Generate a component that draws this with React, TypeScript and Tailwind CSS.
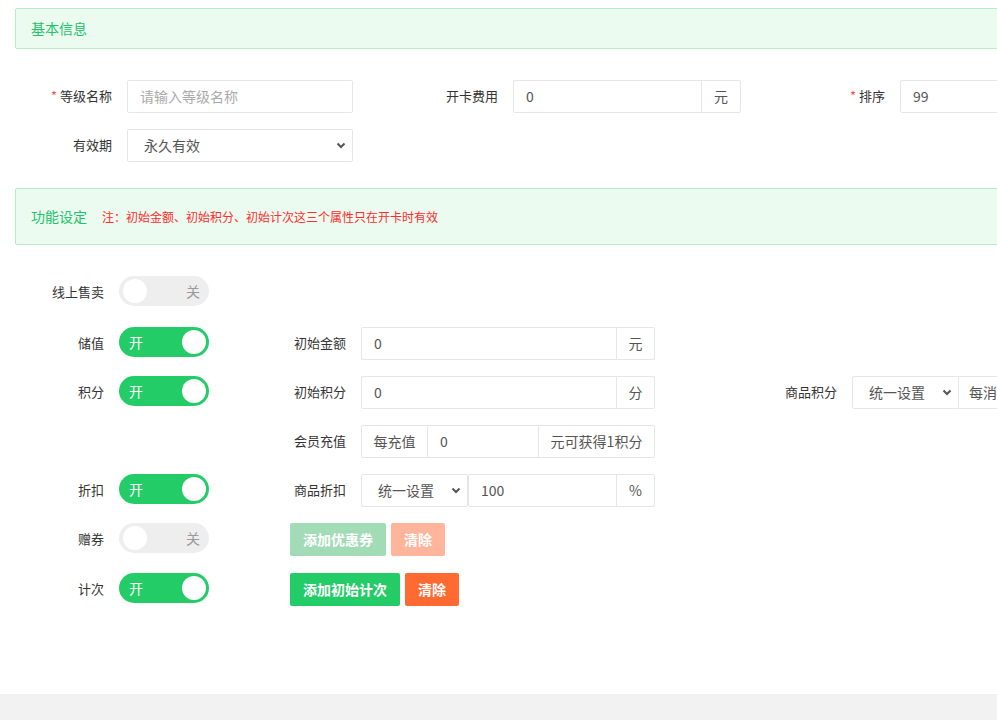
import React from 'react';

const FONT = '"Noto Sans CJK SC", "Noto Sans", sans-serif';

const Chevron: React.FC = () => (
  <svg width="10" height="7" viewBox="0 0 10 7" className="shrink-0">
    <path d="M1.5 1.5 L5 5 L8.5 1.5" fill="none" stroke="#555" strokeWidth="2" />
  </svg>
);

// section title bar
const SectionBar: React.FC<{ title: string; note?: string; tall?: boolean }> = ({ title, note, tall }) => (
  <div
    className={`flex items-center gap-[15px] rounded-[2px] border border-[#b9e9c9] bg-[#ebfbf0] pl-[15px] ${
      tall ? 'h-[57px]' : 'h-[41px]'
    }`}
  >
    <span className="text-[14px] text-[#22c269]">{title}</span>
    {note && <span className="text-[12px] text-[#ff2d2d]">{note}</span>}
  </div>
);

const Label: React.FC<{ text: string; width: string; required?: boolean }> = ({ text, width, required }) => (
  <div className={`${width} shrink-0 pr-[15px] text-right text-[13px] leading-[32px] text-[#333]`}>
    {required && <span className="mr-[3px] text-[#ff4d4f]">*</span>}
    {text}
  </div>
);

const TextBox: React.FC<{ value?: string; placeholder?: string; width: string; suffix?: string; suffixW?: string }> = ({
  value,
  placeholder,
  width,
  suffix,
  suffixW,
}) => (
  <div className={`${width} flex h-[33px] shrink-0 rounded-[2px] border border-[#e6e6e6] bg-white text-[14px]`}>
    <div className={`flex flex-1 items-center px-[12px] ${value ? 'text-[#555]' : 'text-[#aaa]'}`}>
      {value ?? placeholder}
    </div>
    {suffix && (
      <div className={`${suffixW} flex items-center justify-center border-l border-[#e6e6e6] text-[#555]`}>{suffix}</div>
    )}
  </div>
);

const SelectBox: React.FC<{ value: string; width: string; className?: string }> = ({ value, width, className }) => (
  <div
    className={`${width} flex h-[33px] shrink-0 items-center justify-between border border-[#e6e6e6] bg-white pl-[16px] pr-[6px] text-[14px] text-[#555] ${
      className ?? 'rounded-[2px]'
    }`}
  >
    <span>{value}</span>
    <Chevron />
  </div>
);

const Toggle: React.FC<{ on: boolean }> = ({ on }) =>
  on ? (
    <div className="flex h-[30px] w-[90px] shrink-0 items-center justify-between rounded-full bg-[#23cc67] pl-[10px] pr-[3px]">
      <span className="text-[14px] text-white">开</span>
      <span className="h-[24px] w-[24px] rounded-full bg-white" />
    </div>
  ) : (
    <div className="flex h-[30px] w-[90px] shrink-0 items-center justify-between rounded-full bg-[#eeeeee] pl-[4px] pr-[9px]">
      <span className="h-[24px] w-[24px] rounded-full bg-white" />
      <span className="text-[14px] text-[#999]">关</span>
    </div>
  );

const Btn: React.FC<{ text: string; color: string }> = ({ text, color }) => (
  <button className={`h-[33px] rounded-[2px] px-[13px] text-[14px] font-bold text-white ${color}`}>{text}</button>
);

export default function App() {
  return (
    <div className="flex h-[720px] w-full flex-col overflow-hidden bg-[#f2f2f2]" style={{ fontFamily: FONT }}>
      <div className="h-[694px] shrink-0 overflow-hidden bg-white">
        <div className="w-[1300px] pl-[15px] pt-[8px]">
          <SectionBar title="基本信息" />

          {/* basic info */}
          <div className="mt-[31px] flex">
            <div className="flex w-[386px]">
              <Label text="等级名称" width="w-[112px]" required />
              <TextBox placeholder="请输入等级名称" width="w-[226px]" />
            </div>
            <div className="flex w-[386px]">
              <Label text="开卡费用" width="w-[112px]" />
              <TextBox value="0" width="w-[228px]" suffix="元" suffixW="w-[39px]" />
            </div>
            <div className="flex w-[386px]">
              <Label text="排序" width="w-[113px]" required />
              <TextBox value="99" width="w-[226px]" />
            </div>
          </div>
          <div className="mt-[16px] flex">
            <Label text="有效期" width="w-[112px]" />
            <SelectBox value="永久有效" width="w-[226px]" />
          </div>

          <div className="mt-[26px]">
            <SectionBar title="功能设定" note="注：初始金额、初始积分、初始计次这三个属性只在开卡时有效" tall />
          </div>

          {/* function settings */}
          <div className="mt-[31px] flex">
            <Label text="线上售卖" width="w-[104px]" />
            <Toggle on={false} />
          </div>

          <div className="mt-[19px] flex">
            <Label text="储值" width="w-[104px]" />
            <Toggle on />
            <Label text="初始金额" width="w-[152px]" />
            <TextBox value="0" width="w-[294px]" suffix="元" suffixW="w-[38px]" />
          </div>

          <div className="mt-[16px] flex">
            <Label text="积分" width="w-[104px]" />
            <Toggle on />
            <Label text="初始积分" width="w-[152px]" />
            <TextBox value="0" width="w-[294px]" suffix="分" suffixW="w-[38px]" />
            <Label text="商品积分" width="w-[197px]" />
            <SelectBox value="统一设置" width="w-[107px]" className="rounded-l-[2px]" />
            <div className="flex h-[33px] items-center border border-l-0 border-[#e6e6e6] px-[10px] text-[14px] text-[#555]">
              每消费
            </div>
            <div className="h-[33px] w-[150px] border border-l-0 border-[#e6e6e6]" />
          </div>

          <div className="mt-[16px] flex">
            <div className="w-[194px] shrink-0" />
            <Label text="会员充值" width="w-[152px]" />
            <div className="flex h-[33px] w-[294px] shrink-0 rounded-[2px] border border-[#e6e6e6] text-[14px] text-[#555]">
              <div className="flex w-[66px] items-center justify-center border-r border-[#e6e6e6]">每充值</div>
              <div className="flex w-[110px] items-center px-[12px]">0</div>
              <div className="flex flex-1 items-center justify-center border-l border-[#e6e6e6]">元可获得1积分</div>
            </div>
          </div>

          <div className="mt-[16px] flex">
            <Label text="折扣" width="w-[104px]" />
            <Toggle on />
            <Label text="商品折扣" width="w-[152px]" />
            <SelectBox value="统一设置" width="w-[107px]" />
            <TextBox value="100" width="w-[187px]" suffix="%" suffixW="w-[38px]" />
          </div>

          <div className="mt-[16px] flex">
            <Label text="赠券" width="w-[104px]" />
            <Toggle on={false} />
            <div className="flex gap-[5px] pl-[81px]">
              <Btn text="添加优惠券" color="bg-[#a2dcb6]" />
              <Btn text="清除" color="bg-[#ffb59b]" />
            </div>
          </div>

          <div className="mt-[17px] flex">
            <Label text="计次" width="w-[104px]" />
            <Toggle on />
            <div className="flex gap-[5px] pl-[81px]">
              <Btn text="添加初始计次" color="bg-[#23cc67]" />
              <Btn text="清除" color="bg-[#ff6a33]" />
            </div>
          </div>
        </div>
      </div>
    </div>
  );
}
